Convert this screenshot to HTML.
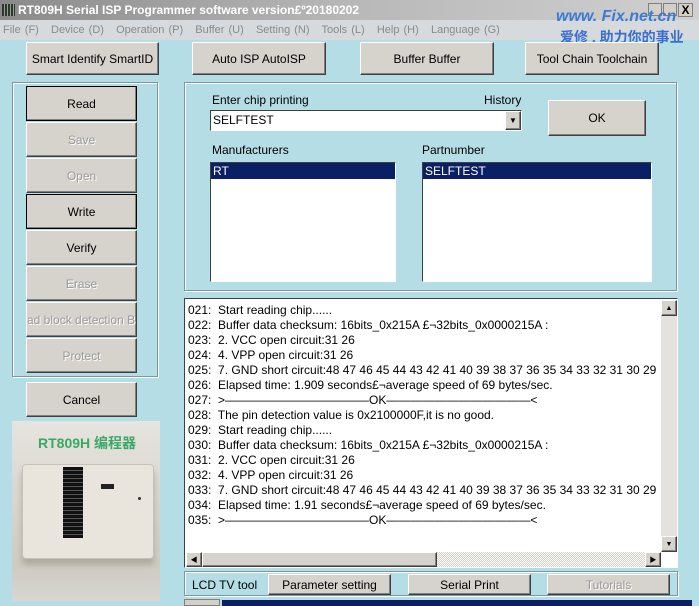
<!DOCTYPE html>
<html><head><style>
*{box-sizing:border-box;margin:0;padding:0}
body{width:699px;height:606px;overflow:hidden;background:#b5dde6;font-family:"Liberation Sans","Noto Sans CJK SC",sans-serif;font-size:12px;position:relative;color:#000}
.a{position:absolute}
.btn{position:absolute;background:#d6d2cc;border:1px solid;border-color:#fff #404040 #404040 #fff;box-shadow:inset -1px -1px 0 #808080;text-align:center;font-size:12px;display:flex;align-items:center;justify-content:center;white-space:nowrap;overflow:hidden}
.dis{color:#9a9a9a;text-shadow:1px 1px 0 #fff}
.grp{position:absolute;border:1px solid #7a98a4;box-shadow:inset 1px 1px 0 #fff,1px 1px 0 #fff}
.log div{height:15px;line-height:15px;white-space:nowrap}
</style></head><body>
<div class="a" style="left:0;top:0;width:699px;height:20px;background:linear-gradient(90deg,#8a8a8a,#b8b8b8 50%,#d0d0d0);color:#fff;font-weight:bold;font-size:12px;line-height:20px;padding-left:18px">RT809H Serial ISP Programmer software version£º20180202</div>
<div class="a" style="left:2px;top:4px;width:13px;height:12px;background:repeating-linear-gradient(90deg,#333 0 2px,#8a8 2px 3px)"></div>
<div class="a" style="left:648px;top:3px;width:14px;height:13px;background:#d4d0c8;border:1px solid #808080"></div>
<div class="a" style="left:663px;top:3px;width:14px;height:13px;background:#d4d0c8;border:1px solid #808080"></div>
<div class="a" style="left:678px;top:3px;width:15px;height:14px;background:#d4d0c8;border:1px solid #808080;font-size:12px;line-height:12px;text-align:center;font-weight:bold">X</div>
<div class="a" style="left:0;top:20px;width:699px;height:20px;background:#d6dadc;color:#8a8a8a;font-size:11px;line-height:20px;padding-left:3px;word-spacing:1px">File (F) &nbsp; Device (D) &nbsp; Operation (P) &nbsp; Buffer (U) &nbsp; Setting (N) &nbsp; Tools (L) &nbsp; Help (H) &nbsp; Language (G)</div>
<div class="a" style="left:556px;top:8px;color:#3a7bd5;font-size:16px;font-style:italic;font-weight:bold">www. Fix.net.cn</div>
<div class="a" style="left:560px;top:27px;color:#3a6fd0;font-size:14px;font-weight:bold">爱修 . 助力你的事业</div>
<div class="btn" style="left:26px;top:42px;width:133px;height:33px">Smart Identify SmartID</div>
<div class="btn" style="left:192px;top:42px;width:134px;height:33px">Auto ISP AutoISP</div>
<div class="btn" style="left:360px;top:42px;width:134px;height:33px">Buffer Buffer</div>
<div class="btn" style="left:525px;top:42px;width:134px;height:33px">Tool Chain Toolchain</div>
<div class="grp" style="left:12px;top:82px;width:146px;height:295px"></div>
<div class="btn" style="left:26px;top:86px;width:111px;height:35px;border:1px solid #000">Read</div>
<div class="btn dis" style="left:26px;top:122px;width:111px;height:35px">Save</div>
<div class="btn dis" style="left:26px;top:158px;width:111px;height:35px">Open</div>
<div class="btn" style="left:26px;top:194px;width:111px;height:35px;border:1px solid #000">Write</div>
<div class="btn" style="left:26px;top:230px;width:111px;height:35px">Verify</div>
<div class="btn dis" style="left:26px;top:266px;width:111px;height:35px">Erase</div>
<div class="btn dis" style="left:26px;top:302px;width:111px;height:35px;justify-content:flex-start"><span style="margin-left:-8px">Bad block detection B</span></div>
<div class="btn dis" style="left:26px;top:338px;width:111px;height:35px">Protect</div>
<div class="btn" style="left:26px;top:382px;width:111px;height:35px">Cancel</div>
<div class="a" style="left:12px;top:421px;width:148px;height:180px;background:linear-gradient(#e6e4de,#cfcac2 80%,#d8d6d0)"></div>
<div class="a" style="left:38px;top:433px;color:#3aa868;font-weight:bold;font-size:14px">RT809H 编程器</div>
<div class="a" style="left:22px;top:464px;width:132px;height:95px;background:#e9e5dc;border:1px solid #c8c2b6;border-radius:4px;box-shadow:0 6px 6px #b0aaa0"></div>
<div class="a" style="left:63px;top:467px;width:20px;height:71px;background:repeating-linear-gradient(#111 0 3px,#555 3px 4px)"></div>
<div class="a" style="left:101px;top:484px;width:13px;height:5px;background:#222"></div>
<div class="a" style="left:138px;top:497px;width:3px;height:3px;background:#333;border-radius:2px"></div>
<div class="grp" style="left:184px;top:82px;width:493px;height:209px"></div>
<div class="a" style="left:212px;top:93px">Enter chip printing</div>
<div class="a" style="left:484px;top:93px">History</div>
<div class="a" style="left:210px;top:110px;width:312px;height:21px;background:#fff;border:1px solid;border-color:#404040 #fff #fff #404040;padding:2px 2px;font-size:12px">SELFTEST</div>
<div class="btn" style="left:505px;top:111px;width:16px;height:19px;font-size:8px">▼</div>
<div class="btn" style="left:548px;top:100px;width:98px;height:36px">OK</div>
<div class="a" style="left:212px;top:143px">Manufacturers</div>
<div class="a" style="left:422px;top:143px">Partnumber</div>
<div class="a" style="left:210px;top:162px;width:186px;height:120px;background:#fff;border:1px solid;border-color:#404040 #fff #fff #404040"><div style="background:#0a1f64;color:#fff;height:16px;line-height:16px;padding-left:2px">RT</div></div>
<div class="a" style="left:422px;top:162px;width:230px;height:120px;background:#fff;border:1px solid;border-color:#404040 #fff #fff #404040"><div style="background:#0a1f64;color:#fff;height:16px;line-height:16px;padding-left:2px">SELFTEST</div></div>
<div class="a log" style="left:184px;top:298px;width:494px;height:270px;background:#fff;border:1px solid;border-color:#404040 #fff #fff #404040;padding:4px 0 0 3px;overflow:hidden;font-size:12px">
<div>021:&nbsp; Start reading chip......</div>
<div>022:&nbsp; Buffer data checksum: 16bits_0x215A £¬32bits_0x0000215A :</div>
<div>023:&nbsp; 2. VCC open circuit:31 26</div>
<div>024:&nbsp; 4. VPP open circuit:31 26</div>
<div>025:&nbsp; 7. GND short circuit:48 47 46 45 44 43 42 41 40 39 38 37 36 35 34 33 32 31 30 29</div>
<div>026:&nbsp; Elapsed time: 1.909 seconds£¬average speed of 69 bytes/sec.</div>
<div>027:&nbsp; &gt;————————————OK————————————&lt;</div>
<div>028:&nbsp; The pin detection value is 0x2100000F,it is no good.</div>
<div>029:&nbsp; Start reading chip......</div>
<div>030:&nbsp; Buffer data checksum: 16bits_0x215A £¬32bits_0x0000215A :</div>
<div>031:&nbsp; 2. VCC open circuit:31 26</div>
<div>032:&nbsp; 4. VPP open circuit:31 26</div>
<div>033:&nbsp; 7. GND short circuit:48 47 46 45 44 43 42 41 40 39 38 37 36 35 34 33 32 31 30 29</div>
<div>034:&nbsp; Elapsed time: 1.91 seconds£¬average speed of 69 bytes/sec.</div>
<div>035:&nbsp; &gt;————————————OK————————————&lt;</div>
</div>
<div class="a" style="left:661px;top:300px;width:16px;height:252px;background:#e4e2de"></div>
<div class="btn" style="left:661px;top:300px;width:16px;height:16px;font-size:7px">▲</div>
<div class="btn" style="left:661px;top:536px;width:16px;height:16px;font-size:7px">▼</div>
<div class="a" style="left:186px;top:552px;width:475px;height:15px;background:repeating-conic-gradient(#d4d0c8 0 25%,#fff 0 50%) 0 0/2px 2px"></div>
<div class="btn" style="left:186px;top:552px;width:16px;height:15px;font-size:7px">◀</div>
<div class="btn" style="left:202px;top:552px;width:235px;height:15px"></div>
<div class="btn" style="left:645px;top:552px;width:16px;height:15px;font-size:7px">▶</div>
<div class="grp" style="left:184px;top:571px;width:494px;height:25px"></div>
<div class="a" style="left:192px;top:578px">LCD TV tool</div>
<div class="btn" style="left:268px;top:574px;width:123px;height:21px">Parameter setting</div>
<div class="btn" style="left:408px;top:574px;width:123px;height:21px">Serial Print</div>
<div class="btn dis" style="left:547px;top:574px;width:123px;height:21px">Tutorials</div>
<div class="a" style="left:184px;top:599px;width:36px;height:7px;background:#d4d0c8;border:1px solid #808080"></div>
<div class="a" style="left:222px;top:600px;width:470px;height:6px;background:#0a1f64"></div>
</body></html>
